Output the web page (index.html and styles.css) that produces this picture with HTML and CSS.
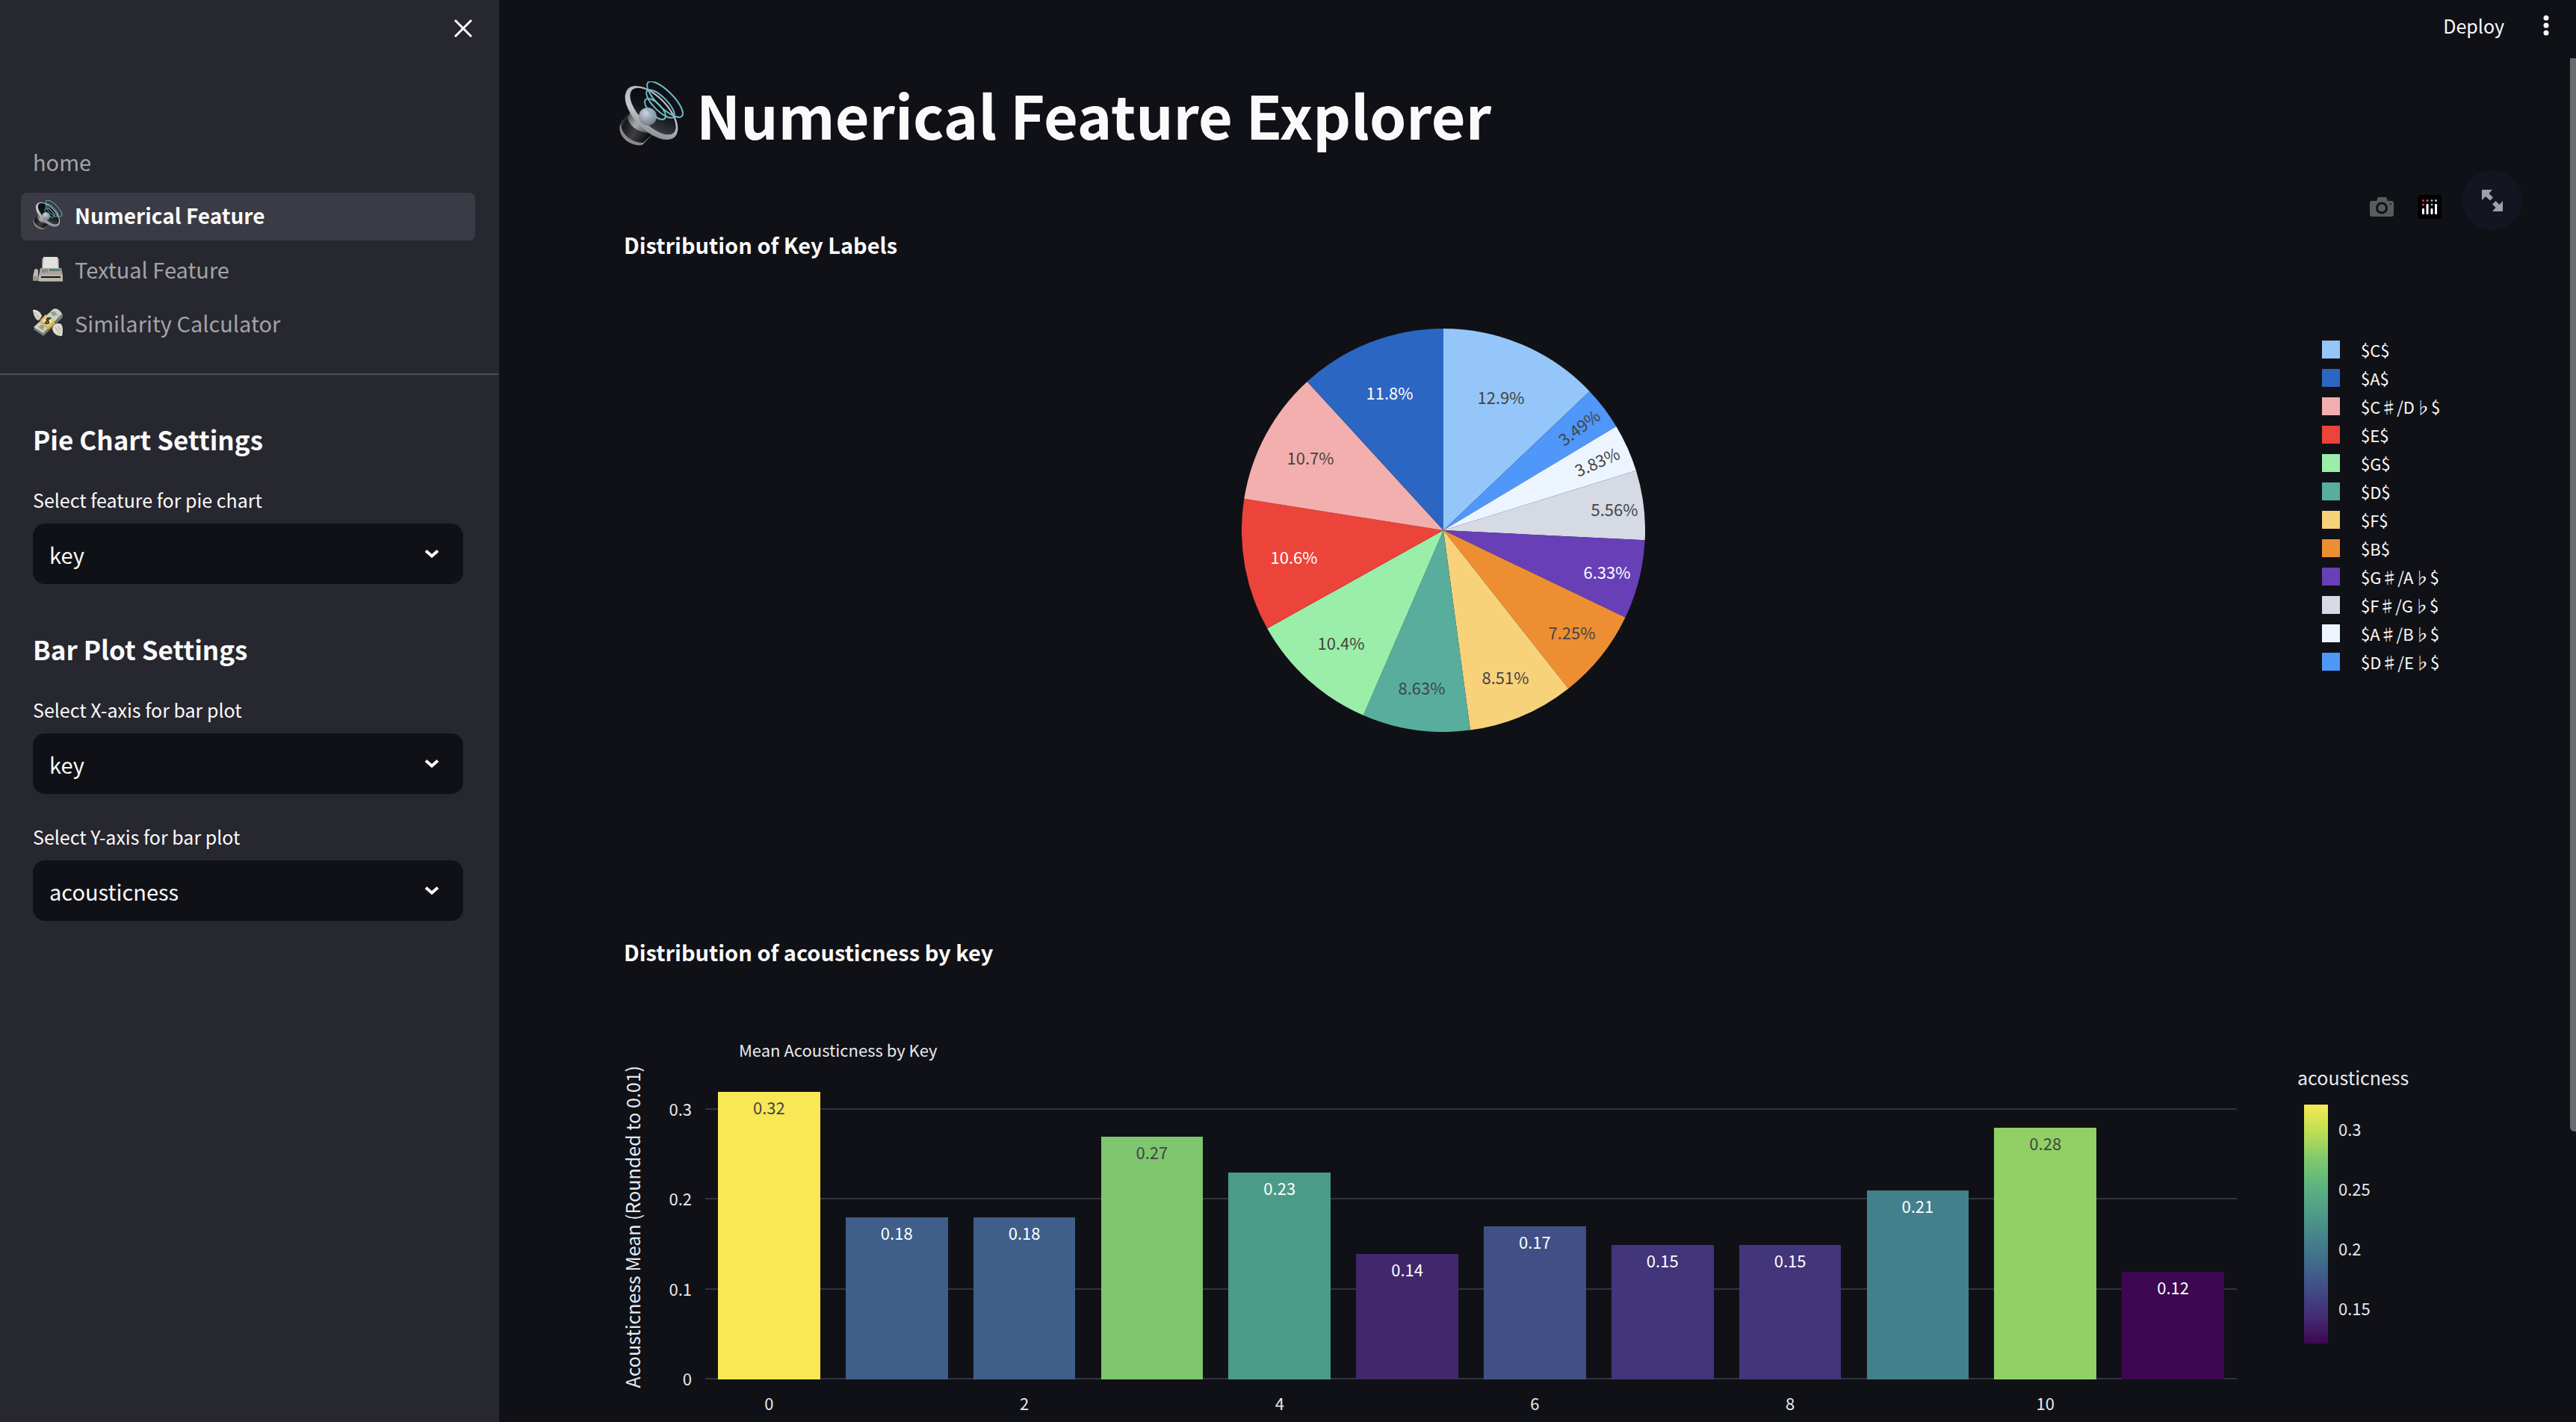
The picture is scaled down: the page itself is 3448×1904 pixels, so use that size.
FILE: index.html
```
<!DOCTYPE html>
<html lang="en">
<head>
<meta charset="utf-8">
<title>Numerical Feature Explorer</title>
<link rel="stylesheet" href="styles.css">
</head>
<body>
<svg class="defs" width="0" height="0" aria-hidden="true">
  <defs>
    <linearGradient id="rim" x1="0" y1="0" x2="1" y2="1">
      <stop offset="0" stop-color="#a9aeba"/><stop offset=".5" stop-color="#c4c8d0"/><stop offset="1" stop-color="#777a80"/>
    </linearGradient>
    <linearGradient id="drum" x1="0" y1="0" x2="1" y2=".5">
      <stop offset="0" stop-color="#77797c"/><stop offset=".25" stop-color="#17181b"/><stop offset=".6" stop-color="#3c4045"/><stop offset="1" stop-color="#0c0d0f"/>
    </linearGradient>
    <linearGradient id="neck" x1="0" y1="0" x2="1" y2=".6">
      <stop offset="0" stop-color="#3a3b3e"/><stop offset=".5" stop-color="#a9a9aa"/><stop offset="1" stop-color="#4a4a4b"/>
    </linearGradient>
    <linearGradient id="cone" x1="0" y1="0" x2="1" y2="1">
      <stop offset="0" stop-color="#050608"/><stop offset=".5" stop-color="#121418"/><stop offset="1" stop-color="#464d53"/>
    </linearGradient>
    <radialGradient id="dome" cx=".4" cy=".3" r=".7">
      <stop offset="0" stop-color="#cdd4e1"/><stop offset="1" stop-color="#747c88"/>
    </radialGradient>
    <symbol id="speaker" viewBox="0 0 88 88">
      <path d="M14 43 2 58C-2 74 16 88 32 85L46 70Z" fill="#8c8986"/>
      <path d="M15 41 3 55C2 70 18 83 33 82L47 69Z" fill="url(#drum)"/>
      <path d="M18 38 12 48C14 62 30 70 46 69L50 58Z" fill="url(#neck)"/>
      <ellipse cx="44" cy="42" rx="45" ry="23" transform="rotate(46 44 42)" fill="url(#rim)"/>
      <ellipse cx="46" cy="40" rx="40" ry="18" transform="rotate(46 46 40)" fill="url(#cone)"/>
      <circle cx="39" cy="47" r="12" fill="url(#dome)"/>
      <g fill="none" stroke="#6fb9c6" stroke-width="2">
        <ellipse cx="62" cy="24" rx="32" ry="11" transform="rotate(45 62 24)"/>
        <ellipse cx="56" cy="30" rx="25" ry="9" transform="rotate(45 56 30)"/>
        <ellipse cx="49" cy="37" rx="18" ry="8" transform="rotate(45 49 37)"/>
      </g>
    </symbol>
    <symbol id="fax" viewBox="0 0 40 40">
      <path d="M12 6h23v16H12z" fill="#8f8c88"/>
      <path d="M14 4h19l1 16H13z" fill="#e2e1df"/>
      <path d="M10 19h28l2 9v9H8v-9z" fill="#aaa69d"/>
      <path d="M2 21c2-2 5-1 5 1v9H0z" fill="#bab6ad"/>
      <path d="M0 30h9v6H0z" fill="#98948b"/>
      <path d="M22 20h15v3H22z" fill="#54807d"/>
      <path d="M12 20h8v5h-8z" fill="#8e8b84"/>
      <path d="M8 28h32v8H8z" fill="#b9b5ac"/>
      <path d="M11 30h26v2H11z" fill="#151515"/>
    </symbol>
    <symbol id="money" viewBox="0 0 40 40">
      <path d="M2 27 27 4c4-3 9 0 13 5v4L14 38 1 29z" fill="#707c70"/>
      <path d="M1 26 27 2c4-2 9 1 12 6L14 34z" fill="#cdd2c4"/>
      <path d="M22 7c4-2 10 0 12 5M7 25l9 6" fill="none" stroke="#899783" stroke-width="1"/>
      <circle cx="28" cy="8" r="3" fill="#8fa38c"/><circle cx="12" cy="26" r="3" fill="#8fa38c"/>
      <path d="M17 9 29 18v4L20 29 10 20V16z" fill="#dcb04c"/>
      <path d="M18 11 27 18 20 25 12 18z" fill="#eadfae"/>
      <path d="M23 15c-4-3-6 1-3 3s0 5-4 2M16 21l8-8" fill="none" stroke="#433d20" stroke-width="2"/>
      <path d="M0 3c6-1 10 3 12 8l-4 6C4 17 1 11 0 3z" fill="#deddd0"/>
      <path d="M26 28c2-7 7-8 12-6 3 5 2 11 1 16-8 0-12-4-13-10z" fill="#deddd0"/>
      <path d="m2 6 7 7m-6-2 5 4M30 26l6 9m-2-10 4 6" stroke="#a4a394" stroke-width="1"/>
    </symbol>
    <symbol id="chevron" viewBox="0 0 20 12">
      <path d="M2 2.500 10 9.500 18 2.500" fill="none" stroke="#fafafa" stroke-width="4"/>
    </symbol>
  </defs>
</svg>
<div class="app">
  <aside class="sidebar">
    <div class="sidebar-top">
      <button class="icon-button" type="button" aria-label="Close sidebar">
        <svg width="24" height="24" viewBox="0 0 24 24"><path d="m1 1 22 22M23 1 1 23" stroke="#fafafa" stroke-width="3"/></svg>
      </button>
    </div>
    <nav class="nav">
      <a class="nav-link" href="#home">home</a>
      <a class="nav-link active" href="#numerical"><svg class="emoji"><use href="#speaker"/></svg>Numerical Feature</a>
      <a class="nav-link" href="#textual"><svg class="emoji"><use href="#fax"/></svg>Textual Feature</a>
      <a class="nav-link" href="#similarity"><svg class="emoji"><use href="#money"/></svg>Similarity Calculator</a>
    </nav>
    <div class="settings">
      <section class="group">
        <h2>Pie Chart Settings</h2>
        <div class="field">
          <label for="pie">Select feature for pie chart</label>
          <div class="select-wrap"><select id="pie"><option>key</option></select><svg class="chevron"><use href="#chevron"/></svg></div>
        </div>
      </section>
      <section class="group">
        <h2>Bar Plot Settings</h2>
        <div class="field">
          <label for="bar-x">Select X-axis for bar plot</label>
          <div class="select-wrap"><select id="bar-x"><option>key</option></select><svg class="chevron"><use href="#chevron"/></svg></div>
        </div>
        <div class="field">
          <label for="bar-y">Select Y-axis for bar plot</label>
          <div class="select-wrap"><select id="bar-y"><option>acousticness</option></select><svg class="chevron"><use href="#chevron"/></svg></div>
        </div>
      </section>
    </div>
  </aside>
  <main class="main">
    <header class="header">
      <button class="deploy" type="button">Deploy</button>
      <button class="icon-button" type="button" aria-label="Menu">
        <svg width="8" height="28" viewBox="0 0 8 28" fill="#fafafa"><circle cx="4" cy="4" r="3.500"/><circle cx="4" cy="14" r="3.500"/><circle cx="4" cy="24" r="3.500"/></svg>
      </button>
    </header>
    <div class="content">
      <h1><svg class="title-emoji"><use href="#speaker"/></svg>Numerical Feature Explorer</h1>

      <section class="pie-section">
        <div class="modebar">
          <button class="mode-button" type="button" aria-label="Download plot">
            <svg width="32" height="26" viewBox="0 0 32 26"><path d="M3 5h6l2-5h11l2 5h5q3 0 3 3v15q0 3-3 3H3q-3 0-3-3V8q0-3 3-3z" fill="#5a5b5f"/><circle cx="16" cy="14.500" r="6.500" fill="none" stroke="#101116" stroke-width="3"/><circle cx="28" cy="9" r="1" fill="#101116"/></svg>
          </button>
          <button class="mode-button" type="button" aria-label="Produced with Plotly">
            <svg width="32" height="32" viewBox="0 0 32 32"><rect width="32" height="32" rx="4" fill="#000"/><g fill="#fff"><rect x="6" y="18" width="3" height="8" rx="1"/><rect x="11.500" y="12" width="3" height="14" rx="1"/><rect x="17.500" y="18" width="3" height="8" rx="1"/><rect x="23" y="12" width="3" height="14" rx="1"/></g><circle cx="7.500" cy="7.500" r="1.500" fill="#ee3d5f"/><circle cx="7.500" cy="13" r="1.500" fill="#ee3d5f"/><circle cx="13" cy="7.500" r="1.500" fill="#c2578f"/><circle cx="19" cy="7.500" r="1.500" fill="#b59bc8"/><circle cx="19" cy="13" r="1.500" fill="#b59bc8"/><circle cx="24.500" cy="7.500" r="1.500" fill="#8fdcf0"/></svg>
          </button>
        </div>
        <button class="fullscreen" type="button" aria-label="View fullscreen">
          <svg width="28" height="29" viewBox="0 0 28 29" fill="#a0a1a5"><path d="M0 0h14L9.500 5l5.500 5.500-4 4L5 9 0 14z"/><path d="M28 29H14l4.500-5L14 19.500l4.500-4.500L23.500 20 28 15z"/></svg>
        </button>
        <h3>Distribution of Key Labels</h3>
        <div class="pie-body">
          <svg class="pie" width="540" height="540" viewBox="-270 -270 540 540" role="img" aria-label="Share of each key">
            <g class="slices">
              <path fill="#94c6f9" d="M0 0V-270A270 270 0 0 1 195.700 -186.100Z"/>
              <path fill="#4f97f8" d="M0 0 195.700 -186.100A270 270 0 0 1 231.400 -139.100Z"/>
              <path fill="#ecf5ff" d="M0 0 231.400 -139.100A270 270 0 0 1 257.900 -79.900Z"/>
              <path fill="#d5dae4" d="M0 0 257.900 -79.900A270 270 0 0 1 269.700 13.200Z"/>
              <path fill="#683fb7" d="M0 0 269.700 13.200A270 270 0 0 1 243.500 116.700Z"/>
              <path fill="#ee8e33" d="M0 0 243.500 116.700A270 270 0 0 1 167.300 211.900Z"/>
              <path fill="#f7d27a" d="M0 0 167.300 211.900A270 270 0 0 1 36 267.600Z"/>
              <path fill="#58ad9d" d="M0 0 36 267.600A270 270 0 0 1 -107.200 247.800Z"/>
              <path fill="#9beea9" d="M0 0 -107.200 247.800A270 270 0 0 1 -235.800 131.600Z"/>
              <path fill="#ec433a" d="M0 0 -235.800 131.600A270 270 0 0 1 -266.700 -42.200Z"/>
              <path fill="#f3afad" d="M0 0 -266.700 -42.200A270 270 0 0 1 -182.300 -199.100Z"/>
              <path fill="#2b66c2" d="M0 0 -182.300 -199.100A270 270 0 0 1 0 -270Z"/>
            </g>
            <g class="slice-text">
              <text x="77" y="-169">12.9%</text>
              <text x="0" y="8" transform="translate(182 -137) rotate(-37)">3.49%</text>
              <text x="0" y="8" transform="translate(206 -91) rotate(-24)">3.83%</text>
              <text x="229" y="-19">5.56%</text>
              <text class="light" x="219" y="65">6.33%</text>
              <text x="172" y="146">7.25%</text>
              <text x="83" y="206">8.51%</text>
              <text x="-29" y="220">8.63%</text>
              <text x="-137" y="160">10.4%</text>
              <text class="light" x="-200" y="45">10.6%</text>
              <text x="-178" y="-88">10.7%</text>
              <text class="light" x="-72" y="-175">11.8%</text>
            </g>
          </svg>
          <ul class="legend">
            <li><i style="background:#94c6f9"></i>$C$</li>
            <li><i style="background:#2b66c2"></i>$A$</li>
            <li><i style="background:#f3afad"></i>$C♯/D♭$</li>
            <li><i style="background:#ec433a"></i>$E$</li>
            <li><i style="background:#9beea9"></i>$G$</li>
            <li><i style="background:#58ad9d"></i>$D$</li>
            <li><i style="background:#f7d27a"></i>$F$</li>
            <li><i style="background:#ee8e33"></i>$B$</li>
            <li><i style="background:#683fb7"></i>$G♯/A♭$</li>
            <li><i style="background:#d5dae4"></i>$F♯/G♭$</li>
            <li><i style="background:#ecf5ff"></i>$A♯/B♭$</li>
            <li><i style="background:#4f97f8"></i>$D♯/E♭$</li>
          </ul>
        </div>
      </section>

      <section class="bar-section">
        <h3>Distribution of acousticness by key</h3>
        <div class="bar-body">
          <div class="y-title">Acousticness Mean (Rounded to 0.01)</div>
          <div class="plot-column">
            <div class="plot-title">Mean Acousticness by Key</div>
            <div class="plot">
              <div class="grid-line" style="bottom:93.75%"><span>0.3</span></div>
              <div class="grid-line" style="bottom:62.5%"><span>0.2</span></div>
              <div class="grid-line" style="bottom:31.25%"><span>0.1</span></div>
              <div class="grid-line" style="bottom:0%"><span>0</span></div>
              <div class="bar dark" style="height:100%;background:#f9e855">0.32</div>
              <div class="bar" style="height:56.25%;background:#3f5f8a">0.18</div>
              <div class="bar" style="height:56.25%;background:#3f5f8a">0.18</div>
              <div class="bar dark" style="height:84.375%;background:#7dc66e">0.27</div>
              <div class="bar" style="height:71.875%;background:#4b9b89">0.23</div>
              <div class="bar" style="height:43.75%;background:#42276c">0.14</div>
              <div class="bar" style="height:53.125%;background:#405086">0.17</div>
              <div class="bar" style="height:46.875%;background:#43357a">0.15</div>
              <div class="bar" style="height:46.875%;background:#43357a">0.15</div>
              <div class="bar" style="height:65.625%;background:#43808b">0.21</div>
              <div class="bar dark" style="height:87.5%;background:#90d064">0.28</div>
              <div class="bar" style="height:37.5%;background:#3d0751">0.12</div>
            </div>
            <div class="x-axis"><span>0</span><span></span><span>2</span><span></span><span>4</span><span></span><span>6</span><span></span><span>8</span><span></span><span>10</span><span></span></div>
          </div>
          <div class="colorbar">
            <div class="colorbar-title">acousticness</div>
            <div class="colorbar-body">
              <div class="ramp"></div>
              <div class="ramp-ticks"><span>0.3</span><span>0.25</span><span>0.2</span><span>0.15</span></div>
            </div>
          </div>
        </div>
      </section>
    </div>
    <div class="scroll-thumb"></div>
  </main>
</div>
</body>
</html>
```
FILE: styles.css
```
* { box-sizing: border-box; }
body {
  margin: 0;
  background: #101116;
  color: #fafafa;
  font-family: "Noto Sans CJK SC", "Noto Sans", sans-serif;
  font-size: 29px;
  line-height: 40px;
}
h1, h2, h3, ul { margin: 0; padding: 0; }
button {
  padding: 0;
  border: 0;
  background: none;
  color: inherit;
  font: inherit;
}
button svg { display: block; }
.defs { position: absolute; }
.app { display: flex; height: 100vh; overflow: hidden; }

/* Sidebar */
.sidebar { flex: 0 0 668px; background: #27272f; }
.sidebar-top {
  display: flex;
  justify-content: flex-end;
  align-items: flex-start;
  height: 186px;
  padding: 26px 36px 0 0;
}
.nav {
  display: flex;
  flex-direction: column;
  gap: 8px;
  padding: 0 32px 34px 28px;
  border-bottom: 2px solid #4d4e58;
}
.nav-link {
  display: flex;
  align-items: center;
  gap: 16px;
  height: 64px;
  padding: 0 16px 4px;
  border-radius: 8px;
  color: #a2a3a7;
  text-decoration: none;
}
.nav-link.active { background: #3b3b45; color: #fafafa; font-size: 28px; font-weight: 700; }
.emoji { width: 40px; height: 40px; }
.settings {
  display: flex;
  flex-direction: column;
  gap: 63px;
  padding: 62px 48px 0 44px;
}
.group { display: flex; flex-direction: column; gap: 37px; }
h2 { font-size: 35px; line-height: 48px; font-weight: 700; }
.field { display: flex; flex-direction: column; gap: 12px; }
.field label { font-size: 25px; }
.select-wrap { position: relative; }
select {
  display: block;
  width: 100%;
  height: 81px;
  padding: 0 64px 0 22px;
  border: 0;
  border-radius: 16px;
  background: #101116;
  color: #fafafa;
  font: inherit;
  appearance: none;
}
.chevron {
  position: absolute;
  top: 34px;
  right: 32px;
  width: 20px;
  height: 12px;
  pointer-events: none;
}

/* Main area */
.main { position: relative; flex: 1; min-width: 0; }
.header {
  display: flex;
  justify-content: flex-end;
  align-items: center;
  gap: 52px;
  height: 67px;
  padding-right: 36px;
}
.deploy { font-size: 25px; }
.content { padding: 33px 160px 0; }
h1 {
  display: flex;
  align-items: center;
  gap: 16px;
  font-size: 79px;
  line-height: 106px;
  font-weight: 700;
}
.title-emoji { width: 88px; height: 88px; }
h3 {
  padding-left: 7px;
  font-size: 29px;
  line-height: 40px;
  font-weight: 700;
}
.scroll-thumb {
  position: absolute;
  top: 78px;
  right: 0;
  width: 8px;
  height: 1437px;
  border-bottom-left-radius: 6px;
  background: #6b6c70;
}

/* Pie chart */
.pie-section { position: relative; padding-top: 101px; }
.modebar {
  position: absolute;
  top: 38px;
  right: 12px;
  display: flex;
  align-items: center;
  gap: 32px;
  height: 50px;
  padding: 16px 8px 0 24px;
}
.fullscreen {
  position: absolute;
  top: 22px;
  right: -88px;
  display: flex;
  align-items: center;
  justify-content: center;
  width: 80px;
  height: 80px;
  border-radius: 50%;
  background: #131620;
}
.pie-body {
  display: grid;
  grid-template-columns: 1fr 252px;
  padding-top: 93px;
}
.pie { justify-self: center; }
.slice-text { font-size: 22px; fill: #444; text-anchor: middle; }
.slice-text .light { fill: #fff; }
.legend {
  padding: 9px 0 0 72px;
  list-style: none;
  font-size: 22px;
}
.legend li {
  display: flex;
  align-items: center;
  gap: 28px;
  height: 38px;
  white-space: nowrap;
}
.legend i { width: 24px; height: 24px; }

/* Bar chart */
.bar-section { padding-top: 274px; }
.bar-body { display: flex; padding-top: 95px; color: #e6eaf1; font-size: 22px; line-height: 32px; }
.y-title {
  width: 36px;
  margin: 38px 80px 0 0;
  align-self: flex-start;
  writing-mode: vertical-rl;
  transform: rotate(180deg);
  font-size: 25px;
  line-height: 36px;
  white-space: nowrap;
}
.plot-column { flex: 1; min-width: 0; }
.plot-title { padding-left: 45px; }
.plot {
  position: relative;
  display: grid;
  grid-template-columns: repeat(12, 1fr);
  align-items: end;
  justify-items: center;
  height: 385px;
  margin-top: 41px;
}
.grid-line {
  position: absolute;
  left: 0;
  right: 0;
  border-bottom: 2px solid #31333e;
}
.grid-line span {
  position: absolute;
  top: -16px;
  right: 100%;
  padding-right: 18px;
}
.bar {
  position: relative;
  width: 80%;
  padding-top: 4px;
  color: #fff;
  text-align: center;
}
.bar.dark { color: #444; }
.x-axis {
  display: grid;
  grid-template-columns: repeat(12, 1fr);
  padding-top: 15px;
  text-align: center;
}
.colorbar { width: 294px; padding: 33px 0 0 81px; }
.colorbar-title { font-size: 25px; line-height: 40px; }
.colorbar-body { display: flex; gap: 14px; padding: 17px 0 0 9px; }
.ramp {
  width: 32px;
  height: 320px;
  background: linear-gradient(#f9e855, #bfdf52 11%, #83cb6a 22%, #5eb57e 33%, #4f9f88 44%, #45828b 56%, #40698c 67%, #404a86 78%, #442b73 89%, #3d0751);
}
.ramp-ticks { display: flex; flex-direction: column; gap: 48px; padding-top: 16px; }
```
